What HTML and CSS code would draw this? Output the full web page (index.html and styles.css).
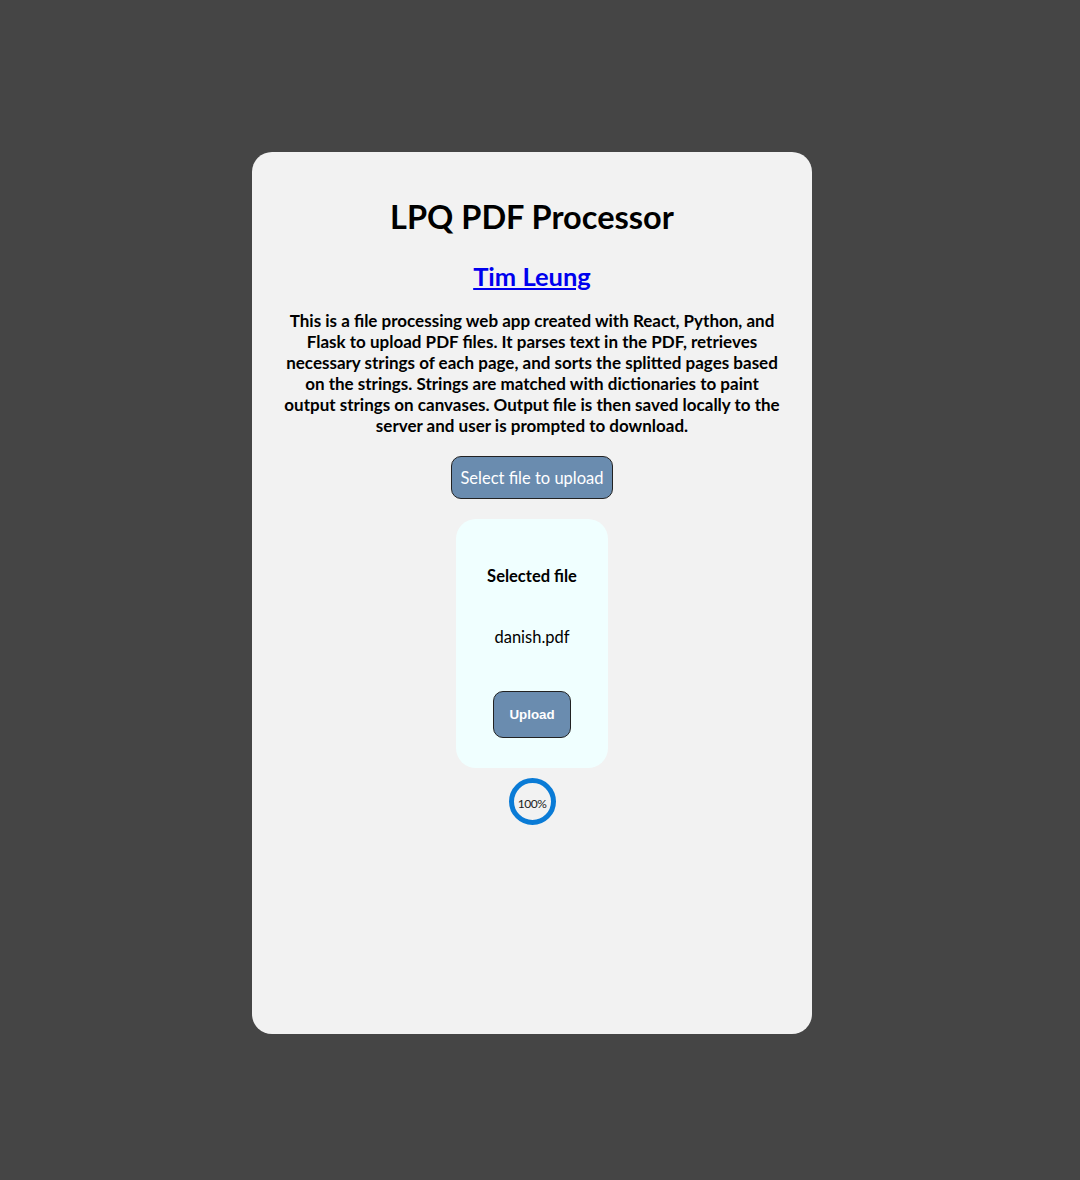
FILE: index.html
```html
<!DOCTYPE html>
<html>
<head>
<meta charset="utf-8">
<link rel="stylesheet" href="styles.css">
</head>
<body>
<main class="card">
  <h1 class="title">LPQ PDF Processor</h1>
  <h2 class="author"><a href="#">Tim Leung</a></h2>
  <p class="desc">This is a file processing web app created with React, Python, and Flask to upload PDF files. It parses text in the PDF, retrieves necessary strings of each page, and sorts the splitted pages based on the strings. Strings are matched with dictionaries to paint output strings on canvases. Output file is then saved locally to the server and user is prompted to download.</p>
  <button class="select-btn">Select file to upload</button>
  <section class="file-box">
    <h4 class="file-label">Selected file</h4>
    <p class="file-name">danish.pdf</p>
    <button class="upload-btn">Upload</button>
  </section>
  <div class="progress">
    <span class="progress-text">100%</span>
  </div>
</main>
</body>
</html>
```
FILE: styles.css
```css
html, body {
  margin: 0;
  padding: 0;
}
body {
  background: #454545;
  min-height: 1180px;
  box-sizing: border-box;
  padding-right: 16px;
  font-family: "Lato", "Open Sans", sans-serif;
  display: flex;
  justify-content: center;
  align-items: flex-start;
}
.card {
  margin-top: 152px;
  width: 560px;
  height: 882px;
  box-sizing: border-box;
  background: #f2f2f2;
  border-radius: 20px;
  padding: 0 30px;
  display: flex;
  flex-direction: column;
  align-items: center;
  text-align: center;
}
.title {
  margin: 44px 0 0;
  font-size: 32.5px;
  line-height: 42px;
  font-weight: 700;
  color: #000;
}
.author {
  margin: 22px 0 0;
  font-size: 25.5px;
  line-height: 32px;
  font-weight: 700;
}
.author a {
  color: #0000ee;
}
.desc {
  margin: 18px 0 0;
  font-size: 17px;
  line-height: 21px;
  font-weight: 700;
  color: #000;
}
.select-btn {
  margin-top: 20px;
  width: 162px;
  height: 43px;
  background: #6a8caf;
  border: 1px solid #222;
  border-radius: 10px;
  color: #fff;
  font-family: inherit;
  font-size: 16.5px;
  padding: 0;
}
.file-box {
  margin-top: 20px;
  width: 152px;
  height: 249px;
  box-sizing: border-box;
  background: #f0ffff;
  border-radius: 20px;
  display: flex;
  flex-direction: column;
  align-items: center;
  padding-top: 46px;
}
.file-label {
  margin: 0;
  font-size: 16.5px;
  line-height: 22px;
  font-weight: 700;
}
.file-name {
  margin: 39px 0 0;
  font-size: 16.5px;
  line-height: 22px;
}
.upload-btn {
  margin-top: 43px;
  width: 78px;
  height: 47px;
  background: #6a8caf;
  border: 1px solid #222;
  border-radius: 10px;
  color: #fff;
  font-family: "Liberation Sans", Arial, sans-serif;
  font-weight: 700;
  font-size: 13.33px;
  padding: 0;
}
.progress {
  margin-top: 10px;
  width: 47px;
  height: 47px;
  box-sizing: border-box;
  border: 5px solid #0a7bd6;
  border-radius: 50%;
  display: flex;
  align-items: center;
  justify-content: center;
}
.progress-text {
  font-size: 12px;
  color: #222;
  margin-top: 4px;
  letter-spacing: -0.5px;
}
```
